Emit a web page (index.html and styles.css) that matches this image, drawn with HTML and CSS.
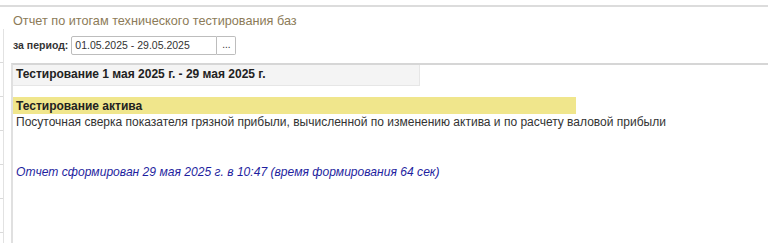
FILE: index.html
```html
<!DOCTYPE html>
<html lang="ru">
<head>
  <meta charset="UTF-8" />
  <title>Отчет по итогам технического тестирования баз</title>
  <link rel="stylesheet" href="styles.css">
</head>
<body>
  <div class="janela">
    <div class="lateral"></div>
    <div class="painel">
      <div class="titulo">Отчет по итогам технического тестирования баз</div>

      <div class="periodo">
        <label for="periodo">за период:</label>
        <div class="campo">
          <input type="text" id="periodo" value="01.05.2025 - 29.05.2025" />
          <button>...</button>
        </div>
      </div>

      <div class="documento">
        <div class="cabecalho">Тестирование 1 мая 2025 г. - 29 мая 2025 г.</div>
        <div class="grupo">Тестирование актива</div>
        <div class="linha">Посуточная сверка показателя грязной прибыли, вычисленной по изменению актива и по расчету валовой прибыли</div>
        <div class="rodape">Отчет сформирован 29 мая 2025 г. в 10:47 (время формирования 64 сек)</div>
      </div>
    </div>
  </div>
</body>
</html>
```

FILE: styles.css
```css
body {
  margin: 0;
  background: #fff;
  font-family: Arial, "Liberation Sans", sans-serif;
  color: #333;
  overflow: hidden;
}

.janela {
  display: flex;
  margin-top: 5px;
  border-top: 2px solid #dcdcdc;
  height: 236px;
}

.lateral {
  width: 3px;
  margin-top: 22px;
  border-right: 1px solid #e2e2e2;
  background: repeating-linear-gradient(to bottom, transparent 0 33px, #dadada 33px 34px);
}

.painel {
  flex: 1;
  padding-left: 8px;
  display: flex;
  flex-direction: column;
}

.titulo {
  font-size: 12.7px;
  color: #8c7b58;
  padding: 7px 0 0 1px;
  height: 20px;
}

.periodo {
  display: flex;
  align-items: center;
  gap: 3px;
  height: 20px;
  padding-left: 1px;
  margin-top: 1px;
}

.periodo label {
  font-size: 10.5px;
  font-weight: bold;
}

.campo {
  display: flex;
}

.campo input {
  width: 146px;
  height: 19px;
  box-sizing: border-box;
  border: 1px solid #bdbdbd;
  border-radius: 2px 0 0 2px;
  padding: 0 3px;
  font-family: inherit;
  font-size: 10.5px;
  color: #333;
}

.campo button {
  width: 19px;
  height: 19px;
  box-sizing: border-box;
  border: 1px solid #bdbdbd;
  border-left: none;
  border-radius: 0 2px 2px 0;
  background: #fff;
  font-size: 10px;
  color: #333;
  padding: 0;
  line-height: 14px;
}

.documento {
  flex: 1;
  margin-top: 8px;
  margin-left: -1px;
  border-top: 2px solid #d6d6d6;
  border-left: 2px solid #e0e0e0;
  font-size: 12px;
}

.cabecalho {
  width: 403px;
  height: 20px;
  line-height: 19px;
  padding-left: 3px;
  background: #f4f4f4;
  border-right: 1px solid #e6e6e6;
  border-bottom: 1px solid #e6e6e6;
  font-weight: bold;
  color: #222;
}

.grupo {
  margin-top: 11px;
  width: 560px;
  height: 17px;
  line-height: 18px;
  padding-left: 3px;
  background: #f0e68c;
  font-weight: bold;
  color: #222;
}

.linha {
  padding-left: 3px;
  line-height: 16px;
}

.rodape {
  margin-top: 35px;
  padding-left: 3px;
  font-style: italic;
  color: #1f1fa0;
  font-size: 12.1px;
}
```
